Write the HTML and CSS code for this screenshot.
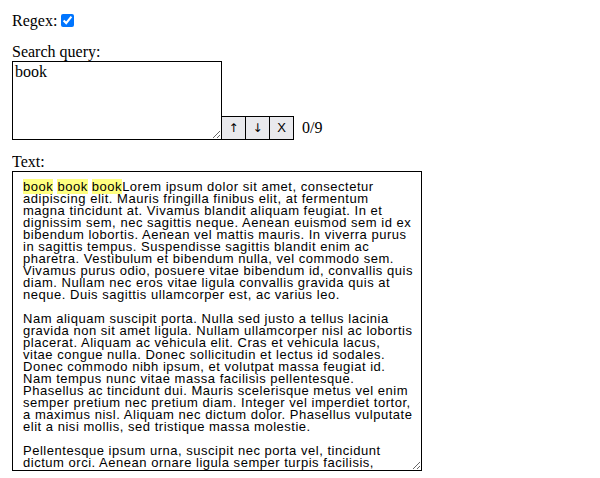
FILE: index.html
```html
<!DOCTYPE html>
<html>
<head>
<meta charset="utf-8">
<link rel="stylesheet" href="styles.css">
</head>
<body>
<div class="section regex-row">
  <label class="regex">Regex: <input type="checkbox" checked></label>
</div>
<div class="section">
  <div class="label">Search query:</div>
  <div class="query-row">
    <textarea class="query">book</textarea>
    <div class="btns">
      <button class="btn"><span class="arrow">↑</span></button><button class="btn"><span class="arrow">↓</span></button><button class="btn">X</button>
    </div>
    <span class="count">0/9</span>
  </div>
</div>
<div class="section">
  <div class="label">Text:</div>
  <div class="textbox"><mark>book</mark> <mark>book</mark> <mark>book</mark>Lorem ipsum dolor sit amet, consectetur adipiscing elit. Mauris fringilla finibus elit, at fermentum magna tincidunt at. Vivamus blandit aliquam feugiat. In et dignissim sem, nec sagittis neque. Aenean euismod sem id ex bibendum lobortis. Aenean vel mattis mauris. In viverra purus in sagittis tempus. Suspendisse sagittis blandit enim ac pharetra. Vestibulum et bibendum nulla, vel commodo sem. Vivamus purus odio, posuere vitae bibendum id, convallis quis diam. Nullam nec eros vitae ligula convallis gravida quis at neque. Duis sagittis ullamcorper est, ac varius leo.

Nam aliquam suscipit porta. Nulla sed justo a tellus lacinia gravida non sit amet ligula. Nullam ullamcorper nisl ac lobortis placerat. Aliquam ac vehicula elit. Cras et vehicula lacus, vitae congue nulla. Donec sollicitudin et lectus id sodales. Donec commodo nibh ipsum, et volutpat massa feugiat id. Nam tempus nunc vitae massa facilisis pellentesque. Phasellus ac tincidunt dui. Mauris scelerisque metus vel enim semper pretium nec pretium diam. Integer vel imperdiet tortor, a maximus nisl. Aliquam nec dictum dolor. Phasellus vulputate elit a nisi mollis, sed tristique massa molestie.

Pellentesque ipsum urna, suscipit nec porta vel, tincidunt dictum orci. Aenean ornare ligula semper turpis facilisis, sollicitudin vehicula nibh lobortis. Sed book ut book tempor purus.</div>
</div>
</body>
</html>
```

FILE: styles.css
```css
body {
  margin: 12px;
  font-family: "Liberation Serif", "Times New Roman", serif;
  font-size: 16px;
  color: #000;
}
.section {
  margin-bottom: 12px;
}
.regex-row {
  line-height: 18px;
  height: 18px;
}
.regex input {
  margin: 0;
  width: 13px;
  height: 13px;
  vertical-align: -1px;
}
.label {
  line-height: 19px;
}
.query-row {
  display: flex;
  align-items: flex-end;
}
.query {
  width: 210px;
  height: 79px;
  box-sizing: border-box;
  border: 1px solid #000;
  padding: 1px 2px;
  margin: 0;
  font-family: "Liberation Serif", serif;
  font-size: 16px;
  resize: both;
}
.btns {
  display: flex;
}
.btn {
  width: 25px;
  height: 24px;
  box-sizing: border-box;
  border: 1px solid #000;
  margin: 0 0 0 -1px;
  padding: 0;
  background: #e9e9ed;
  font-family: "Liberation Sans", Arial, sans-serif;
  font-size: 13px;
  color: #000;
  line-height: 22px;
}
.arrow {
  font-family: "DejaVu Sans", sans-serif;
  font-size: 12px;
}
.count {
  margin-left: 8px;
  line-height: 18px;
  padding-bottom: 3px;
}
.textbox {
  width: 410px;
  height: 300px;
  box-sizing: border-box;
  border: 1px solid #000;
  padding: 9px 8px 9px 10px;
  overflow: hidden;
  resize: both;
  white-space: pre-wrap;
  font-family: "Liberation Sans", Arial, sans-serif;
  font-size: 13px;
  line-height: 12px;
  letter-spacing: 0.52px;
}
mark {
  background: #ffff80;
  color: #000;
}
```
